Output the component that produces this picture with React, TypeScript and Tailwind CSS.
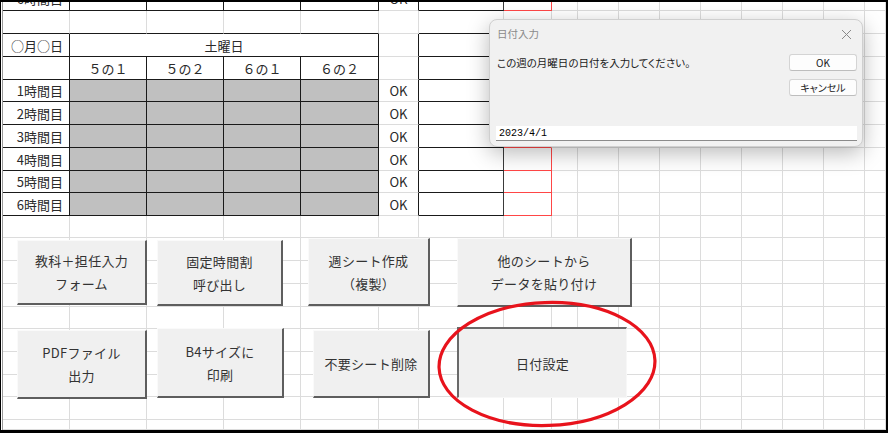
import React from "react";

const RED = "border-r-[#ff4646]";
const REDB = "border-b-[#ff4646]";

function borderClasses(r: number, c: number): string {
  let right = "border-r-[#dcdcdc]";
  let bottom = "border-b-[#dcdcdc]";
  const tableRow = r === 0 || (r >= 2 && r <= 9);
  if (c <= 4 && tableRow) {
    right = "border-r-[#1a1a1a]";
    bottom = "border-b-[#1a1a1a]";
  }
  if (c <= 4 && r === 1) bottom = "border-b-[#1a1a1a]";
  if (c === 5 && tableRow) right = "border-r-[#1a1a1a]";
  if (c === 6 && tableRow) {
    right = "border-r-[#3a3a3a]";
    bottom = "border-b-[#1a1a1a]";
  }
  if (c === 6 && r === 1) bottom = "border-b-[#1a1a1a]";
  if (c === 7 && r === 0) {
    right = RED;
    bottom = REDB;
  }
  if (c === 7 && r === 6) bottom = REDB;
  if (c === 7 && r >= 7 && r <= 9) {
    right = RED;
    bottom = REDB;
  }
  return `border-r border-b ${right} ${bottom}`;
}

function cellContent(r: number, c: number): { text?: string; align?: "right" | "center"; gray?: boolean } {
  if (r === 0 && c === 0) return { text: "6時間目", align: "right" };
  if (r === 0 && c === 5) return { text: "OK", align: "center" };
  if (r === 2 && c === 0) return { text: "○月○日", align: "right" };
  if (r === 3 && c >= 1 && c <= 4) {
    const labels = ["５の１", "５の２", "６の１", "６の２"];
    return { text: labels[c - 1], align: "center" };
  }
  if (r >= 4 && r <= 9) {
    if (c === 0) return { text: `${r - 3}時間目`, align: "right" };
    if (c === 5) return { text: "OK", align: "center" };
    if (c >= 1 && c <= 4) return { gray: true };
  }
  return {};
}

function Grid() {
  const cells: React.ReactNode[] = [];
  for (let r = 0; r < 20; r++) {
    for (let c = 0; c < 17; c++) {
      if (r === 2 && c >= 2 && c <= 4) continue;
      const b = borderClasses(r, c);
      if (r === 2 && c === 1) {
        cells.push(
          <div
            key={`${r}-${c}`}
            className={`col-span-4 flex items-center justify-center ${b} border-r-[#1a1a1a]`}
          >
            土曜日
          </div>
        );
        continue;
      }
      const ct = cellContent(r, c);
      const bg = ct.gray ? "bg-[#c0c0c0]" : "bg-white";
      const just = ct.align === "right" ? "justify-end pr-[6px]" : "justify-center";
      if (r === 0) {
        cells.push(
          <div key={`${r}-${c}`} className={`flex items-end overflow-hidden ${b} ${bg}`}>
            <div className={`h-[23px] w-full shrink-0 flex items-center ${just}`}>{ct.text}</div>
          </div>
        );
      } else {
        cells.push(
          <div key={`${r}-${c}`} className={`flex items-center overflow-hidden ${just} ${b} ${bg}`}>
            {ct.text}
          </div>
        );
      }
    }
  }
  return (
    <div className="grid grid-cols-[67px_77px_77px_77px_78px_40px_85px_48px_26px_41px_41px_41px_41px_41px_41px_41px_21px] grid-rows-[9px_23px_23px_23px_22px_23px_23px_23px_22px_23px_22px_23px_23px_23px_22px_23px_23px_22px_23px_10px] text-[13px] leading-none text-[#2a2a2a]">
      {cells}
    </div>
  );
}

function XlButton({
  className,
  lines,
  pressed,
}: {
  className: string;
  lines: string[];
  pressed?: boolean;
}) {
  const edge = pressed
    ? "border-t-2 border-l-2 border-t-[#6a6a6a] border-l-[#6a6a6a] border-r border-b border-r-[#f7f7f7] border-b-[#f7f7f7]"
    : "border-t border-l border-t-[#fafafa] border-l-[#fafafa] border-r-2 border-b-2 border-r-[#5e5e5e] border-b-[#5e5e5e]";
  return (
    <div
      className={`absolute flex flex-col items-center justify-center bg-[#f0f0f0] text-[13px] leading-[23px] tracking-[0.3px] text-[#333] ${edge} ${className}`}
    >
      {lines.map((l, i) => (
        <div key={i}>{l}</div>
      ))}
    </div>
  );
}

function Dialog() {
  return (
    <div className="absolute left-[489px] top-[19px] w-[374px] h-[128px] rounded-[8px] border border-[#cfcfcf] bg-[#f1f1f1] shadow-[0_6px_22px_rgba(0,0,0,0.28)] flex flex-col [font-feature-settings:'palt']">
      <div className="h-[28px] flex items-center justify-between pl-[7px] pr-[10px]">
        <span className="text-[10.5px] text-[#8a8a8a]">日付入力</span>
        <svg width="11" height="11" viewBox="0 0 11 11">
          <path d="M1 1 L10 10 M10 1 L1 10" stroke="#8a8a8a" strokeWidth="1" fill="none" />
        </svg>
      </div>
      <div className="flex justify-between">
        <div className="pl-[7px] pt-[8px] text-[10.5px] leading-[14px] text-[#1a1a1a]">
          この週の月曜日の日付を入力してください。
        </div>
        <div className="flex flex-col gap-[8px] pr-[5px] pt-[6px]">
          <div className="w-[68px] h-[17px] rounded-[3px] border border-[#d4d4d4] border-b-[#bdbdbd] bg-[#fdfdfd] flex items-center justify-center text-[10px] text-[#1a1a1a]">
            OK
          </div>
          <div className="w-[68px] h-[17px] rounded-[3px] border border-[#d4d4d4] border-b-[#bdbdbd] bg-[#fdfdfd] flex items-center justify-center text-[10px] text-[#1a1a1a]">
            キャンセル
          </div>
        </div>
      </div>
      <div className="mt-auto mb-[5px] ml-[6px] mr-[5px] h-[15px] bg-white border-b border-b-[#8a8a8a] flex items-center pl-[3px] font-['Liberation_Mono',monospace] text-[10px] text-black [font-feature-settings:normal]">
        2023/4/1
      </div>
    </div>
  );
}

export default function App() {
  return (
    <div className="relative w-[888px] h-[433px] overflow-hidden bg-white font-['Noto_Sans_CJK_JP',sans-serif]">
      <div className="w-[888px] h-[433px] border-t-2 border-l border-r-2 border-b-[3px] border-black pl-px">
        <div className="border-l border-l-[#9a9a9a]">
          <Grid />
        </div>
      </div>

      <XlButton className="left-[17px] top-[240px] w-[130px] h-[65px]" lines={["教科＋担任入力", "フォーム"]} />
      <XlButton className="left-[157px] top-[240px] w-[126px] h-[66px]" lines={["固定時間割", "呼び出し"]} />
      <XlButton className="left-[308px] top-[238px] w-[122px] h-[68px]" lines={["週シート作成", "（複製）"]} />
      <XlButton className="left-[457px] top-[238px] w-[175px] h-[69px]" lines={["他のシートから", "データを貼り付け"]} />
      <XlButton className="left-[17px] top-[330px] w-[130px] h-[69px]" lines={["PDFファイル", "出力"]} />
      <XlButton className="left-[157px] top-[328px] w-[127px] h-[70px]" lines={["B4サイズに", "印刷"]} />
      <XlButton className="left-[313px] top-[330px] w-[117px] h-[68px]" lines={["不要シート削除"]} />
      <XlButton className="left-[457px] top-[327px] w-[170px] h-[71px]" lines={["日付設定"]} pressed />

      <svg className="absolute left-[434px] top-[298px] pointer-events-none" width="226" height="132" viewBox="0 0 226 132">
        <ellipse cx="113" cy="66" rx="108" ry="61.5" fill="none" stroke="#e8131c" strokeWidth="3.2" transform="rotate(-2 113 66)" />
      </svg>

      <Dialog />
    </div>
  );
}
